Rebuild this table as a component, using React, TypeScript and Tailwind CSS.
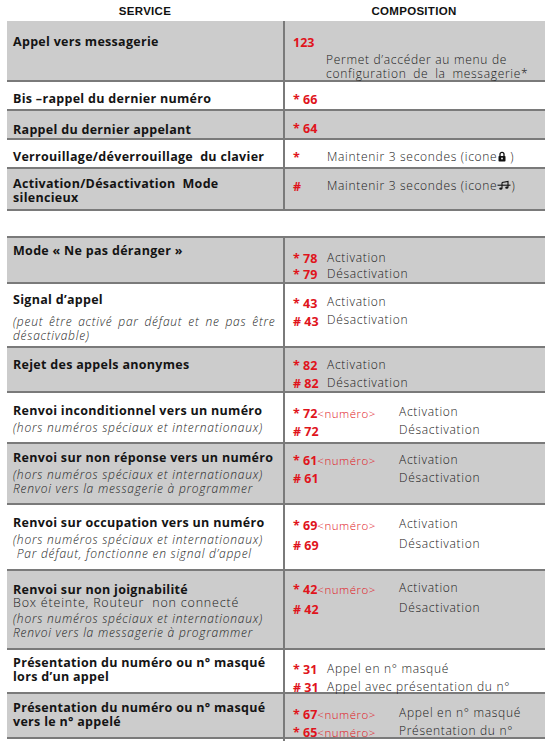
import React from "react";

const GRAY = "bg-[#cccccc]";

function Row({
  h,
  gray,
  left,
  right,
  divider = true,
}: {
  h: string;
  gray?: boolean;
  left?: React.ReactNode;
  right?: React.ReactNode;
  divider?: boolean;
}) {
  return (
    <div className={`grid grid-cols-[276px_262px] border-b-2 border-[#7a7a7a] ${h} ${gray ? GRAY : "bg-white"}`}>
      <div className="pl-[6px] pr-1">{left}</div>
      <div className={`pl-[8px] ${divider ? "border-l-2 border-[#7a7a7a]" : ""}`}>{right}</div>
    </div>
  );
}

function Title({ children, pt, lh = "leading-[13px]" }: { children: React.ReactNode; pt: string; lh?: string }) {
  return <div className={`${pt} ${lh} font-bold text-[12.5px] text-[#141414] tracking-[0.3px] whitespace-nowrap`}>{children}</div>;
}

function Note({ children, mt }: { children: React.ReactNode; mt: string }) {
  return (
    <div className={`${mt} italic font-light text-[12px] leading-[14px] text-[#1c1c1c] tracking-[0.75px] whitespace-nowrap`}>
      {children}
    </div>
  );
}

function Code({ c, n, d, wide }: { c: string; n?: string; d: React.ReactNode; wide?: boolean }) {
  return (
    <div className="flex whitespace-nowrap">
      <span className={`shrink-0 text-[#e0141c] ${wide ? "w-[106px]" : "w-[34px]"}`}>
        <span className="font-bold text-[12.5px]">{c}</span>
        {n && <span className="font-light text-[11.5px] tracking-[0.5px]">{n}</span>}
      </span>
      <span className="font-light text-[12px] tracking-[0.7px] text-[#1a1a1a]">{d}</span>
    </div>
  );
}

function Lock() {
  return (
    <svg viewBox="0 0 8 11" className="inline-block w-[8px] h-[11px] align-[-1px] ml-[1px]">
      <path d="M2 5V3.3a2 2 0 0 1 4 0V5" fill="none" stroke="#111" strokeWidth="1.3" />
      <rect x="0.5" y="5" width="7" height="5.5" rx="0.8" fill="#111" />
      <circle cx="4" cy="7.5" r="0.9" fill="#fff" />
    </svg>
  );
}

function Silent() {
  return (
    <svg viewBox="0 0 14 11" className="inline-block w-[14px] h-[11px] align-[-1px]">
      <path d="M5 2.5L11 1.5v6" fill="none" stroke="#111" strokeWidth="1.1" />
      <path d="M5 2.5v6" fill="none" stroke="#111" strokeWidth="1.1" />
      <ellipse cx="3.8" cy="8.7" rx="1.6" ry="1.1" fill="#111" />
      <ellipse cx="9.8" cy="7.7" rx="1.6" ry="1.1" fill="#111" />
      <path d="M0.5 5.2h13" stroke="#111" strokeWidth="1.1" />
    </svg>
  );
}

export default function App() {
  return (
    <div className="min-h-[745px] bg-white font-['Open_Sans','Noto_Sans',sans-serif]">
      <div className="ml-[7px] w-[538px]">
        <div className="grid grid-cols-[276px_262px] h-[21px] items-center text-center font-bold text-[11.5px] text-[#111] font-['Liberation_Sans',sans-serif] tracking-[0.3px] pt-[2px]">
          <div>SERVICE</div>
          <div>COMPOSITION</div>
        </div>

        <Row
          h="h-[61px]"
          gray
          left={<Title pt="pt-[14px]">Appel vers messagerie</Title>}
          right={
            <div className="pt-[14px] leading-[15px]">
              <div className="font-bold text-[12.5px] text-[#e0141c]">123</div>
              <div className="mt-[3px] pl-[33px] font-light text-[12px] leading-[14px] tracking-[0.7px] text-[#1a1a1a] whitespace-nowrap">
                Permet d’accéder au menu de
                <br />
                <span className="[word-spacing:3px]">configuration de la messagerie*</span>
              </div>
            </div>
          }
        />
        <Row
          h="h-[29px]"
          left={<Title pt="pt-[10px]">Bis –rappel du dernier numéro</Title>}
          right={
            <div className="pt-[9px] leading-[15px]">
              <Code c="* 66" d="" />
            </div>
          }
        />
        <Row
          h="h-[29px]"
          gray
          left={<Title pt="pt-[12px]">Rappel du dernier appelant</Title>}
          right={
            <div className="pt-[9px] leading-[15px]">
              <Code c="* 64" d="" />
            </div>
          }
        />
        <Row
          h="h-[29px]"
          left={<Title pt="pt-[10px]">Verrouillage/déverrouillage&nbsp; du clavier</Title>}
          right={
            <div className="pt-[9px] leading-[15px]">
              <Code
                c="*"
                d={
                  <>
                    Maintenir 3 secondes (icone
                    <Lock /> )
                  </>
                }
              />
            </div>
          }
        />
        <Row
          h="h-[42px]"
          gray
          left={
            <Title pt="pt-[8px]" lh="leading-[14px]">
              Activation/Désactivation&nbsp; Mode
              <br />
              silencieux
            </Title>
          }
          right={
            <div className="pt-[9px] leading-[15px]">
              <Code
                c="#"
                d={
                  <>
                    Maintenir 3 secondes (icone
                    <Silent />)
                  </>
                }
              />
            </div>
          }
        />
        <Row h="h-[27px]" divider={false} />

        <Row
          h="h-[46px]"
          gray
          left={<Title pt="pt-[6px]">Mode « Ne pas déranger »</Title>}
          right={
            <div className="pt-[12px] leading-[15px]">
              <Code c="* 78" d="Activation" />
              <Code c="* 79" d="Désactivation" />
            </div>
          }
        />
        <Row
          h="h-[64px]"
          left={
            <>
              <Title pt="pt-[9px]">Signal d’appel</Title>
              <Note mt="mt-[9px]">
                <span className="[word-spacing:2px]">(peut être activé par défaut et ne pas être</span>
                <br />
                désactivable)
              </Note>
            </>
          }
          right={
            <div className="pt-[10px] leading-[16px]">
              <Code c="* 43" d="Activation" />
              <Code c="# 43" d="Désactivation" />
            </div>
          }
        />
        <Row
          h="h-[45px]"
          gray
          left={<Title pt="pt-[10px]">Rejet des appels anonymes</Title>}
          right={
            <div className="pt-[8px] leading-[17px]">
              <Code c="* 82" d="Activation" />
              <Code c="# 82" d="Désactivation" />
            </div>
          }
        />
        <Row
          h="h-[51px]"
          left={
            <>
              <Title pt="pt-[11px]">Renvoi inconditionnel vers un numéro</Title>
              <Note mt="mt-[4px]">(hors numéros spéciaux et internationaux)</Note>
            </>
          }
          right={
            <div className="pt-[11px] leading-[16px]">
              <Code wide c="* 72" n="<numéro>" d="Activation" />
              <Code wide c="# 72" d="Désactivation" />
            </div>
          }
        />
        <Row
          h="h-[61px]"
          gray
          left={
            <>
              <Title pt="pt-[7px]">Renvoi sur non réponse vers un numéro</Title>
              <Note mt="mt-[4px]">
                (hors numéros spéciaux et internationaux)
                <br />
                Renvoi vers la messagerie à programmer
              </Note>
            </>
          }
          right={
            <div className="pt-[7px] leading-[17px]">
              <Code wide c="* 61" n="<numéro>" d="Activation" />
              <Code wide c="# 61" d="Désactivation" />
            </div>
          }
        />
        <Row
          h="h-[66px]"
          left={
            <>
              <Title pt="pt-[11px]">Renvoi sur occupation vers un numéro</Title>
              <Note mt="mt-[4px]">
                (hors numéros spéciaux et internationaux)
                <br />
                &nbsp;Par défaut, fonctionne en signal d’appel
              </Note>
            </>
          }
          right={
            <div className="pt-[10px] leading-[18px]">
              <Code wide c="* 69" n="<numéro>" d="Activation" />
              <Code wide c="# 69" d="Désactivation" />
            </div>
          }
        />
        <Row
          h="h-[79px]"
          gray
          left={
            <>
              <Title pt="pt-[12px]">Renvoi sur non joignabilité</Title>
              <div className="font-light text-[12.5px] leading-[13px] tracking-[0.8px] text-[#1a1a1a] whitespace-nowrap">
                Box éteinte, Routeur&nbsp; non connecté
              </div>
              <Note mt="mt-[3px]">
                (hors numéros spéciaux et internationaux)
                <br />
                Renvoi vers la messagerie à programmer
              </Note>
            </>
          }
          right={
            <div className="pt-[8px] leading-[18px]">
              <Code wide c="* 42" n="<numéro>" d="Activation" />
              <Code wide c="# 42" d="Désactivation" />
            </div>
          }
        />
        <Row
          h="h-[44px]"
          left={
            <Title pt="pt-[6px]" lh="leading-[14px]">
              Présentation du numéro ou n° masqué
              <br />
              lors d’un appel
            </Title>
          }
          right={
            <div className="pt-[10px] leading-[17px]">
              <Code c="* 31" d="Appel en n° masqué" />
              <Code c="# 31" d="Appel avec présentation du n°" />
            </div>
          }
        />
        <Row
          h="h-[45px]"
          gray
          left={
            <Title pt="pt-[7px]" lh="leading-[14px]">
              Présentation du numéro ou n° masqué
              <br />
              vers le n° appelé
            </Title>
          }
          right={
            <div className="pt-[11px] leading-[16px]">
              <Code wide c="* 67" n="<numéro>" d="Appel en n° masqué" />
              <Code wide c="* 65" n="<numéro>" d="Présentation du n°" />
            </div>
          }
        />
      </div>
    </div>
  );
}
